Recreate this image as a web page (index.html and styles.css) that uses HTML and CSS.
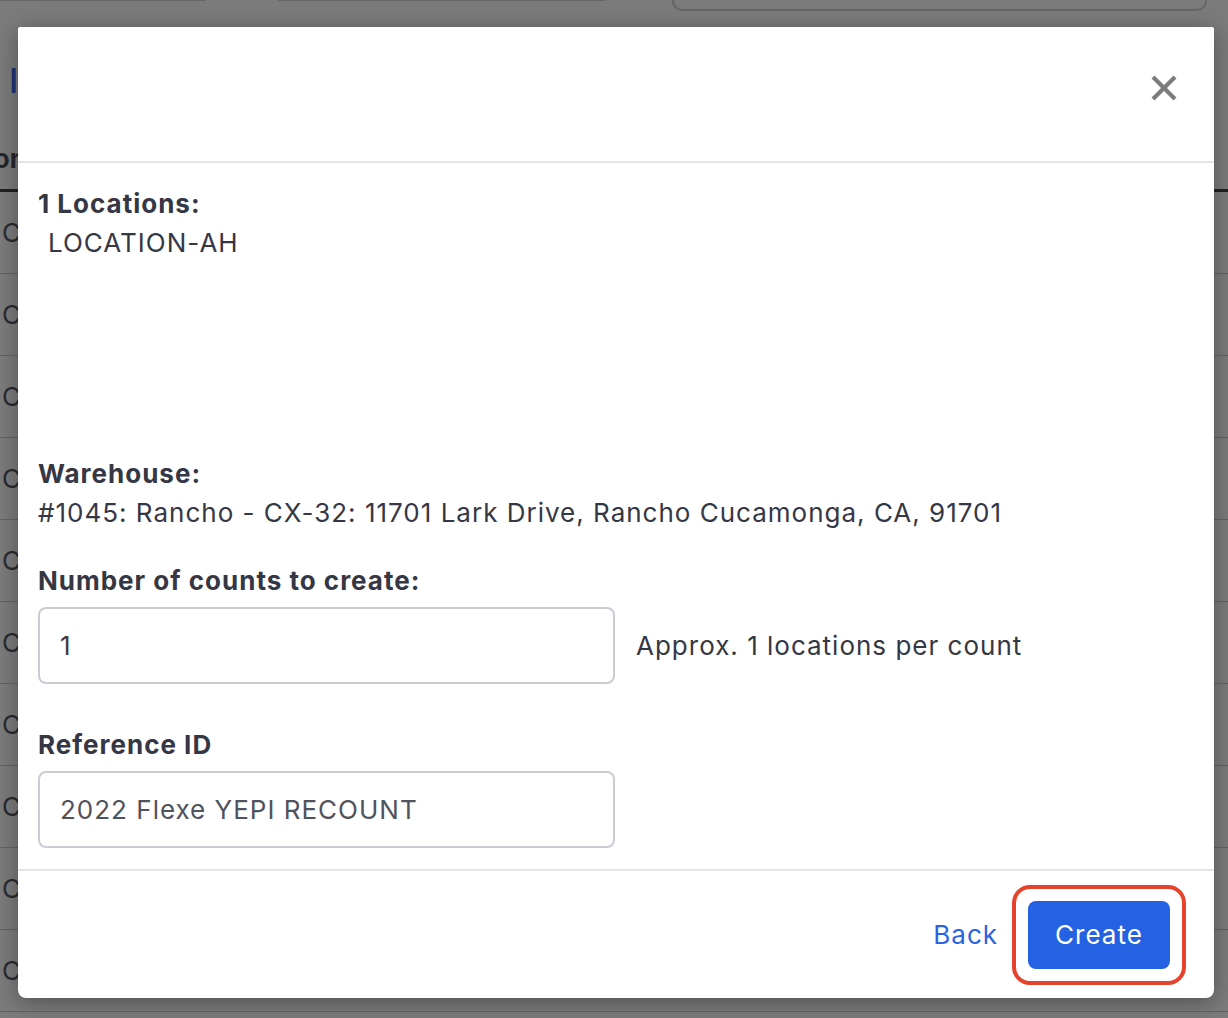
FILE: index.html
```html
<!DOCTYPE html>
<html lang="en">
<head>
    <meta charset="UTF-8">
    <title>Create Counts</title>
    <link rel="stylesheet" href="styles.css">
</head>
<body>
    <div class="page">
        <div class="topbar">
            <span class="field short"></span>
            <span class="field mid"></span>
            <span class="field search"></span>
        </div>
        <h1 class="title">Inventory Counts</h1>
        <div class="table">
            <div class="thead"><span>Location</span></div>
            <div class="row">Count</div>
            <div class="row">Count</div>
            <div class="row">Count</div>
            <div class="row">Count</div>
            <div class="row">Count</div>
            <div class="row">Count</div>
            <div class="row">Count</div>
            <div class="row">Count</div>
            <div class="row">Count</div>
            <div class="row">Count</div>
        </div>
    </div>

    <div class="modal">
        <div class="modal-head">
            <button class="close" aria-label="Close">
                <svg width="28" height="28" viewBox="0 0 28 28">
                    <path d="M3 3 L25 25 M25 3 L3 25" stroke="#7c7c7c" stroke-width="4.2" fill="none"/>
                </svg>
            </button>
        </div>

        <div class="modal-body">
            <div class="locations">
                <div class="label">1 Locations:</div>
                <div class="loc-item">LOCATION-AH</div>
            </div>

            <div class="group">
                <div class="label">Warehouse:</div>
                <div>#1045: Rancho - CX-32: 11701 Lark Drive, Rancho Cucamonga, CA, 91701</div>
            </div>

            <div class="group counts">
                <div class="label">Number of counts to create:</div>
                <div class="input-row">
                    <input class="input" type="text" value="1">
                    <span class="note">Approx. 1 locations per count</span>
                </div>
            </div>

            <div class="group ref">
                <div class="label">Reference ID</div>
                <input class="input light" type="text" value="2022 Flexe YEPI RECOUNT">
            </div>
        </div>

        <div class="modal-foot">
            <a class="back" href="#">Back</a>
            <div class="ring">
                <button class="create">Create</button>
            </div>
        </div>
    </div>
</body>
</html>
```

FILE: styles.css
```css
*{
    box-sizing: border-box;
}

body{
    margin: 0;
    height: 1018px;
    overflow: hidden;
    background-color: #7b7b7b;
    font-family: Inter, "Noto Sans", sans-serif;
    position: relative;
}

/* page behind the overlay */
.topbar{
    display: flex;
    height: 11px;
}

.field{
    display: block;
    height: 1px;
    border-bottom: 1px solid #666;
}

.field.short{
    width: 206px;
}

.field.mid{
    width: 327px;
    margin-left: 72px;
}

.field.search{
    width: 535px;
    height: 11px;
    margin-left: 67px;
    border: 2px solid #666;
    border-top: none;
    border-radius: 0 0 10px 10px;
}

.title{
    margin: 50px 0 0 9px;
    font-size: 34px;
    line-height: 40px;
    color: #1b3578;
    font-weight: 500;
}

.table{
    margin-top: 41px;
}

.thead{
    height: 50px;
    border-bottom: 3px solid #1f1f26;
    font-size: 26px;
    font-weight: 700;
    color: #25252c;
    line-height: 34px;
    overflow: hidden;
}

.thead span{
    margin-left: -84px;
}

.row{
    height: 82px;
    border-bottom: 1px solid #626262;
    padding-left: 2px;
    font-size: 26px;
    line-height: 82px;
    color: #2a2a30;
}

/* modal */
.modal{
    position: absolute;
    left: 18px;
    top: 27px;
    width: 1196px;
    height: 971px;
    background: #fff;
    border-radius: 2px 2px 8px 8px;
    box-shadow: 0 4px 22px rgba(0, 0, 0, 0.35);
    display: flex;
    flex-direction: column;
    font-size: 26px;
    line-height: 39px;
    letter-spacing: 1px;
    color: #363744;
}

.modal-head{
    height: 136px;
    border-bottom: 2px solid #e5e5e7;
    display: flex;
    justify-content: flex-end;
    align-items: flex-start;
    padding: 47px 36px 0 0;
}

.close{
    border: none;
    background: none;
    padding: 0;
    width: 28px;
    height: 28px;
    cursor: pointer;
}

.close svg{
    display: block;
}

.modal-body{
    flex: 1;
    padding: 21px 20px 0;
}

.label{
    font-weight: 700;
}

.locations{
    height: 270px;
}

.loc-item{
    padding-left: 10px;
}

.group.counts{
    margin-top: 29px;
}

.group.ref{
    margin-top: 41px;
}

.input-row{
    display: flex;
    align-items: center;
    gap: 21px;
}

.input{
    display: block;
    margin-top: 7px;
    width: 577px;
    height: 77px;
    border: 2px solid #c9ccd2;
    border-radius: 8px;
    padding: 0 20px;
    font-family: inherit;
    font-size: 26px;
    letter-spacing: inherit;
    color: #3a3b47;
    outline: none;
}

.input.light{
    color: #50535e;
}

.note{
    margin-top: 7px;
}

.modal-foot{
    height: 129px;
    border-top: 2px solid #e5e5e7;
    display: flex;
    justify-content: flex-end;
    align-items: center;
    gap: 14px;
    padding-right: 28px;
}

.back{
    color: #2b63e0;
    text-decoration: none;
}

.ring{
    border: 4px solid #e5432c;
    border-radius: 18px;
    padding: 12px;
}

.create{
    display: block;
    width: 142px;
    height: 68px;
    border: none;
    border-radius: 8px;
    background-color: #2462e3;
    color: #fff;
    font-family: inherit;
    font-size: 26px;
    letter-spacing: inherit;
    cursor: pointer;
}
```
